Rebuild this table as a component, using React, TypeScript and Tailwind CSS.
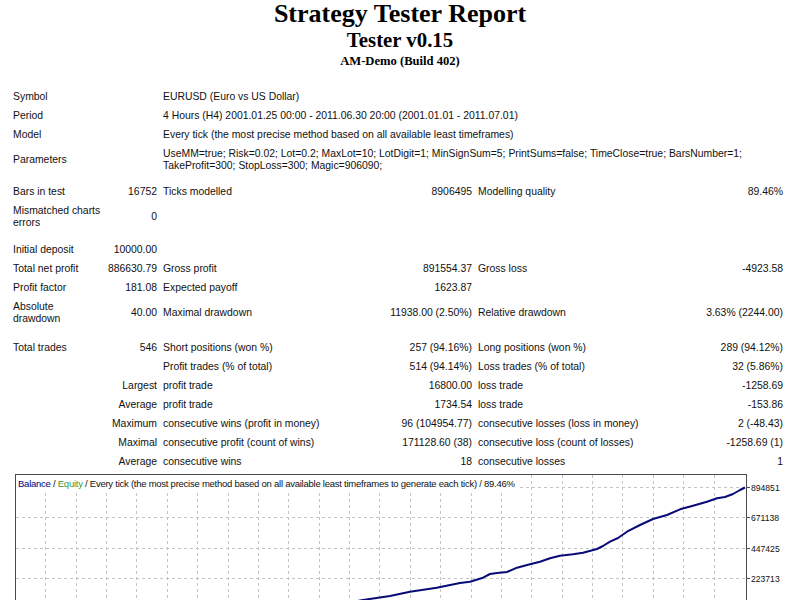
import React from "react";

const GRID = "grid grid-cols-[90px_60px_170px_145px_160px_151px]";

type Cell = { t?: React.ReactNode; r?: boolean; span?: number };

function Row({ cells, h = "h-[19px]" }: { cells: Cell[]; h?: string }) {
  return (
    <div className={`${GRID} ${h} items-center`}>
      {cells.map((c, i) => (
        <div
          key={i}
          className={`px-[3px] whitespace-nowrap ${c.r ? "text-right" : "text-left"} ${
            c.span === 2 ? "col-span-2" : c.span === 4 ? "col-span-4" : ""
          }`}
        >
          {c.t}
        </div>
      ))}
    </div>
  );
}

const curve: [number, number][] = [
  [300, 612], [330, 606], [363, 600], [390, 596], [410, 591.7], [436.7, 587.7], [460, 583],
  [470, 581.7], [483, 577.7], [490, 574], [497, 573], [507, 572], [517, 567.7], [530, 564.3],
  [540, 561.7], [550, 558.3], [560, 555.7], [573, 554.3], [583, 552.7], [597, 549], [603, 546],
  [610, 541.7], [618, 538], [627, 531.7], [640, 525], [653, 519], [660, 517], [667, 515],
  [680, 509.3], [693, 505.7], [707, 501.7], [717, 498.3], [725, 497], [733, 494], [740, 490],
  [745, 487.5],
];

function Chart() {
  const top = 472;
  const hLines = [487.5, 517.5, 548.5, 578.5, 608.5].map((y) => y - top);
  const vLines: number[] = [];
  for (let k = 1; k <= 23; k++) vLines.push(Math.round(15 + 30.37 * k) + 0.5);
  const labels = [
    { y: 487.5, t: "894851" },
    { y: 517.5, t: "671138" },
    { y: 548.5, t: "447425" },
    { y: 578.5, t: "223713" },
  ];
  const pts = curve.map(([x, y]) => `${x},${y - top}`).join(" ");
  return (
    <svg width="800" height="190" viewBox="0 0 800 190" className="block">
      <rect x="0" y="0" width="800" height="190" fill="#ffffff" />
      {hLines.map((y, i) => (
        <line key={"h" + i} x1="16" x2="746" y1={y} y2={y} stroke="#c4c4c4" strokeDasharray="3 3" />
      ))}
      {vLines.map((x, i) => (
        <line key={"v" + i} x1={x} x2={x} y1="3" y2="190" stroke="#c4c4c4" strokeDasharray="3 3" />
      ))}
      <rect x="16" y="3" width="503" height="16" fill="#ffffff" />
      <line x1="15.5" x2="15.5" y1="2" y2="190" stroke="#4a4a4a" />
      <line x1="746.5" x2="746.5" y1="2" y2="190" stroke="#4a4a4a" />
      <line x1="15" x2="747" y1="2.5" y2="2.5" stroke="#4a4a4a" />
      {labels.map((l, i) => (
        <g key={"l" + i}>
          <line x1="746" x2="750" y1={l.y - top} y2={l.y - top} stroke="#4a4a4a" />
          <text
            x="751"
            y={l.y - top + 3.5}
            fontSize="8.6"
            fill="#111"
            fontFamily="'Liberation Sans', Arial, sans-serif"
          >
            {l.t}
          </text>
        </g>
      ))}
      <polyline points={pts} fill="none" stroke="#0a0a78" strokeWidth="2" strokeLinejoin="round" />
      <text
        x="18"
        y="14.5"
        fontSize="9.5"
        fill="#111"
        fontFamily="'Liberation Sans', Arial, sans-serif"
        textLength="497"
        lengthAdjust="spacing"
      >
        <tspan fill="#000080">Balance</tspan>
        <tspan> / </tspan>
        <tspan fill="#3a9a3a">Equity</tspan>
        <tspan>
          {" / Every tick (the most precise method based on all available least timeframes to generate each tick) / 89.46%"}
        </tspan>
      </text>
    </svg>
  );
}

export default function App() {
  return (
    <div className="w-[800px] h-[600px] overflow-hidden bg-white text-[#111]">
      <div className="text-center font-['Liberation_Serif','Times_New_Roman',serif] font-bold text-black">
        <div className="text-[26px] leading-[28px]">Strategy Tester Report</div>
        <div className="text-[20.8px] leading-[24px]">Tester v0.15</div>
        <div className="text-[12.6px] leading-[19px]">AM-Demo (Build 402)</div>
      </div>
      <div className="h-[16px]" />
      <div className="pl-[10px] font-['Liberation_Sans',Arial,sans-serif] text-[10.4px] leading-[12px]">
        <Row cells={[{ t: "Symbol", span: 2 }, { t: "EURUSD (Euro vs US Dollar)", span: 4 }]} />
        <Row
          cells={[
            { t: "Period", span: 2 },
            { t: "4 Hours (H4) 2001.01.25 00:00 - 2011.06.30 20:00 (2001.01.01 - 2011.07.01)", span: 4 },
          ]}
        />
        <Row
          cells={[
            { t: "Model", span: 2 },
            { t: "Every tick (the most precise method based on all available least timeframes)", span: 4 },
          ]}
        />
        <Row
          h="h-[31px]"
          cells={[
            { t: "Parameters", span: 2 },
            {
              t: (
                <>
                  UseMM=true; Risk=0.02; Lot=0.2; MaxLot=10; LotDigit=1; MinSignSum=5; PrintSums=false;
                  TimeClose=true; BarsNumber=1;
                  <br />
                  TakeProfit=300; StopLoss=300; Magic=906090;
                </>
              ),
              span: 4,
            },
          ]}
        />
        <div className="h-[7px]" />
        <Row
          cells={[
            { t: "Bars in test" },
            { t: "16752", r: true },
            { t: "Ticks modelled" },
            { t: "8906495", r: true },
            { t: "Modelling quality" },
            { t: "89.46%", r: true },
          ]}
        />
        <Row
          h="h-[31px]"
          cells={[
            {
              t: (
                <>
                  Mismatched charts
                  <br />
                  errors
                </>
              ),
            },
            { t: "0", r: true },
            { t: "" },
            { t: "", r: true },
            { t: "" },
            { t: "", r: true },
          ]}
        />
        <div className="h-[8px]" />
        <Row
          cells={[
            { t: "Initial deposit" },
            { t: "10000.00", r: true },
            { t: "" },
            { t: "", r: true },
            { t: "" },
            { t: "", r: true },
          ]}
        />
        <Row
          cells={[
            { t: "Total net profit" },
            { t: "886630.79", r: true },
            { t: "Gross profit" },
            { t: "891554.37", r: true },
            { t: "Gross loss" },
            { t: "-4923.58", r: true },
          ]}
        />
        <Row
          cells={[
            { t: "Profit factor" },
            { t: "181.08", r: true },
            { t: "Expected payoff" },
            { t: "1623.87", r: true },
            { t: "" },
            { t: "", r: true },
          ]}
        />
        <Row
          h="h-[31px]"
          cells={[
            {
              t: (
                <>
                  Absolute
                  <br />
                  drawdown
                </>
              ),
            },
            { t: "40.00", r: true },
            { t: "Maximal drawdown" },
            { t: "11938.00 (2.50%)", r: true },
            { t: "Relative drawdown" },
            { t: "3.63% (2244.00)", r: true },
          ]}
        />
        <div className="h-[10px]" />
        <Row
          cells={[
            { t: "Total trades" },
            { t: "546", r: true },
            { t: "Short positions (won %)" },
            { t: "257 (94.16%)", r: true },
            { t: "Long positions (won %)" },
            { t: "289 (94.12%)", r: true },
          ]}
        />
        <Row
          cells={[
            { t: "" },
            { t: "", r: true },
            { t: "Profit trades (% of total)" },
            { t: "514 (94.14%)", r: true },
            { t: "Loss trades (% of total)" },
            { t: "32 (5.86%)", r: true },
          ]}
        />
        <Row
          cells={[
            { t: "Largest", r: true, span: 2 },
            { t: "profit trade" },
            { t: "16800.00", r: true },
            { t: "loss trade" },
            { t: "-1258.69", r: true },
          ]}
        />
        <Row
          cells={[
            { t: "Average", r: true, span: 2 },
            { t: "profit trade" },
            { t: "1734.54", r: true },
            { t: "loss trade" },
            { t: "-153.86", r: true },
          ]}
        />
        <Row
          cells={[
            { t: "Maximum", r: true, span: 2 },
            { t: "consecutive wins (profit in money)" },
            { t: "96 (104954.77)", r: true },
            { t: "consecutive losses (loss in money)" },
            { t: "2 (-48.43)", r: true },
          ]}
        />
        <Row
          cells={[
            { t: "Maximal", r: true, span: 2 },
            { t: "consecutive profit (count of wins)" },
            { t: "171128.60 (38)", r: true },
            { t: "consecutive loss (count of losses)" },
            { t: "-1258.69 (1)", r: true },
          ]}
        />
        <Row
          cells={[
            { t: "Average", r: true, span: 2 },
            { t: "consecutive wins" },
            { t: "18", r: true },
            { t: "consecutive losses" },
            { t: "1", r: true },
          ]}
        />
      </div>
      <div className="h-[1px]" />
      <Chart />
    </div>
  );
}
